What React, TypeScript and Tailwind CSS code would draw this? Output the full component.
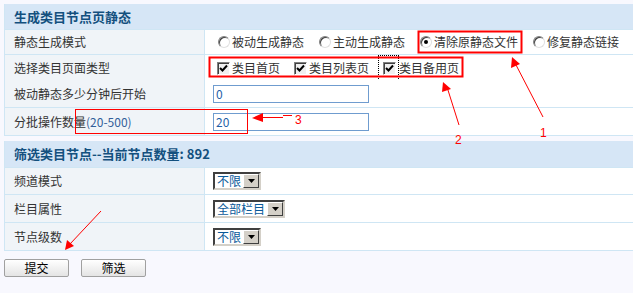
import React from 'react';

const font = { fontFamily: '"Noto Sans CJK SC", "Liberation Sans", sans-serif' };

const Radio = ({ checked }: { checked?: boolean }) => (
  <span className="relative inline-block w-3 h-3 rounded-full bg-white border border-t-[#808080] border-l-[#808080] border-b-[#e0e0e0] border-r-[#e0e0e0] shadow-[inset_1px_1px_0_#404040]">
    {checked && <span className="absolute left-[3px] top-[3px] w-1 h-1 rounded-full bg-black" />}
  </span>
);

const Check = () => (
  <span className="inline-flex items-center justify-center w-[13px] h-[13px] bg-[#f0f0f0] border border-t-[#808080] border-l-[#808080] border-b-white border-r-white shadow-[inset_1px_1px_0_#404040]">
    <svg width="9" height="9" viewBox="0 0 9 9">
      <path d="M1 4 L3.5 6.5 L8 1.5" fill="none" stroke="#000" strokeWidth="2" />
    </svg>
  </span>
);

const Select = ({ value }: { value: string }) => (
  <div className="inline-flex items-stretch h-[18px] bg-white border-2 border-t-[#404040] border-l-[#404040] border-b-[#d4d0c8] border-r-[#d4d0c8]">
    <span className="px-[2px] text-[12px] leading-[14px] text-[#0a5a9a]">{value}</span>
    <span className="w-[16px] flex items-center justify-center bg-[#d4d0c8] border border-t-white border-l-white border-b-[#404040] border-r-[#404040]">
      <svg width="7" height="4" viewBox="0 0 7 4"><path d="M0 0 H7 L3.5 4 Z" fill="#000" /></svg>
    </span>
  </div>
);

const Row = ({ label, h, children }: { label: React.ReactNode; h: string; children: React.ReactNode }) => (
  <div className={`grid grid-cols-[200px_1fr] border-t border-[#cfe6f4] ${h}`}>
    <div className="bg-[#f0f4f8] border-r border-[#cfe6f4] flex items-center pl-[9px] text-[#333]">{label}</div>
    <div className="bg-white flex items-center pl-[8px]">{children}</div>
  </div>
);

const Header = ({ children, h }: { children: React.ReactNode; h: string }) => (
  <div className={`bg-[#d6e6f6] ${h} flex items-center pl-[9px] text-[13px] font-bold text-[#13507e]`}>{children}</div>
);

export default function App() {
  return (
    <div className="relative w-[633px] h-[293px] overflow-hidden bg-[#f8f8fe] pt-1 pl-1 text-[12px]" style={font}>
      <div className="border-l border-b border-[#cfe6f4]">
        <Header h="h-[25px]">生成类目节点页静态</Header>
        <Row label="静态生成模式" h="h-[25px]">
          <div className="flex items-center text-[#333]">
            <span className="ml-[5px] flex items-center gap-[2px]"><Radio />被动生成静态</span>
            <span className="ml-[15px] flex items-center gap-[2px]"><Radio />主动生成静态</span>
            <span className="ml-[15px] flex items-center gap-[2px]"><Radio checked />清除原静态文件</span>
            <span className="ml-[15px] flex items-center gap-[2px]"><Radio />修复静态链接</span>
          </div>
        </Row>
        <Row label="选择类目页面类型" h="h-[25px]">
          <div className="flex items-center text-[#333]">
            <span className="ml-[4px] flex items-center gap-[2px]"><Check />类目首页</span>
            <span className="ml-[14px] flex items-center gap-[2px]"><Check />类目列表页</span>
            <span className="ml-[9px] flex items-center">
              <span className="pl-[4px] pr-[2px] py-[3px] border border-dotted border-black"><Check /></span>类目备用页
            </span>
          </div>
        </Row>
        <Row label="被动静态多少分钟后开始" h="h-[28px]">
          <div className="w-[156px] h-[18px] border border-[#6f9ccf] bg-white text-[#1f5fa8] pl-[2px] leading-[16px]">0</div>
        </Row>
        <Row label={<span>分批操作数量<span className="text-[#335f9a]">(20-500)</span></span>} h="h-[28px]">
          <div className="w-[156px] h-[18px] border border-[#6f9ccf] bg-white text-[#1f5fa8] pl-[2px] leading-[16px]">20</div>
        </Row>
      </div>

      <div className="mt-[5px] border-l border-b border-[#cfe6f4]">
        <Header h="h-[26px]">筛选类目节点--当前节点数量: 892</Header>
        <Row label="频道模式" h="h-[27px]"><Select value="不限" /></Row>
        <Row label="栏目属性" h="h-[28px]"><Select value="全部栏目" /></Row>
        <Row label="节点级数" h="h-[28px]"><Select value="不限" /></Row>
      </div>

      <div className="mt-[8px] flex gap-[12px]">
        <button className="w-[65px] h-[18px] rounded-[2px] border border-[#a0a0a0] bg-gradient-to-b from-white to-[#e4e4e4] text-[12px] leading-[14px] text-black">提交</button>
        <button className="w-[65px] h-[18px] rounded-[2px] border border-[#a0a0a0] bg-gradient-to-b from-white to-[#e4e4e4] text-[12px] leading-[14px] text-black">筛选</button>
      </div>

      <svg className="absolute inset-0 pointer-events-none" width="633" height="293" viewBox="0 0 633 293">
        <g fill="none" stroke="#ff0000">
          <rect x="418.5" y="31.5" width="103" height="21" strokeWidth="2" />
          <rect x="209.5" y="57.5" width="253" height="19" strokeWidth="2" />
          <rect x="75.5" y="109.5" width="172" height="24" strokeWidth="1" />
          <path d="M260 117.5 H283 M283 115.5 H292" strokeWidth="1" />
          <path d="M543 117 L515 63" strokeWidth="1" />
          <path d="M459 125 L447 87" strokeWidth="1" />
          <path d="M101 211 L70 244" strokeWidth="1" />
        </g>
        <g fill="#ff0000">
          <polygon points="252,118 263,113 263,122" />
          <polygon points="512,57 511,68 520,64" />
          <polygon points="443,82 442,92 451,89" />
          <polygon points="65,250 67,240 74,246" />
        </g>
        <g fill="#ff0000" fontSize="12" fontFamily="Liberation Sans, sans-serif">
          <text x="295" y="124">3</text>
          <text x="540" y="137">1</text>
          <text x="455" y="144">2</text>
        </g>
      </svg>
    </div>
  );
}
